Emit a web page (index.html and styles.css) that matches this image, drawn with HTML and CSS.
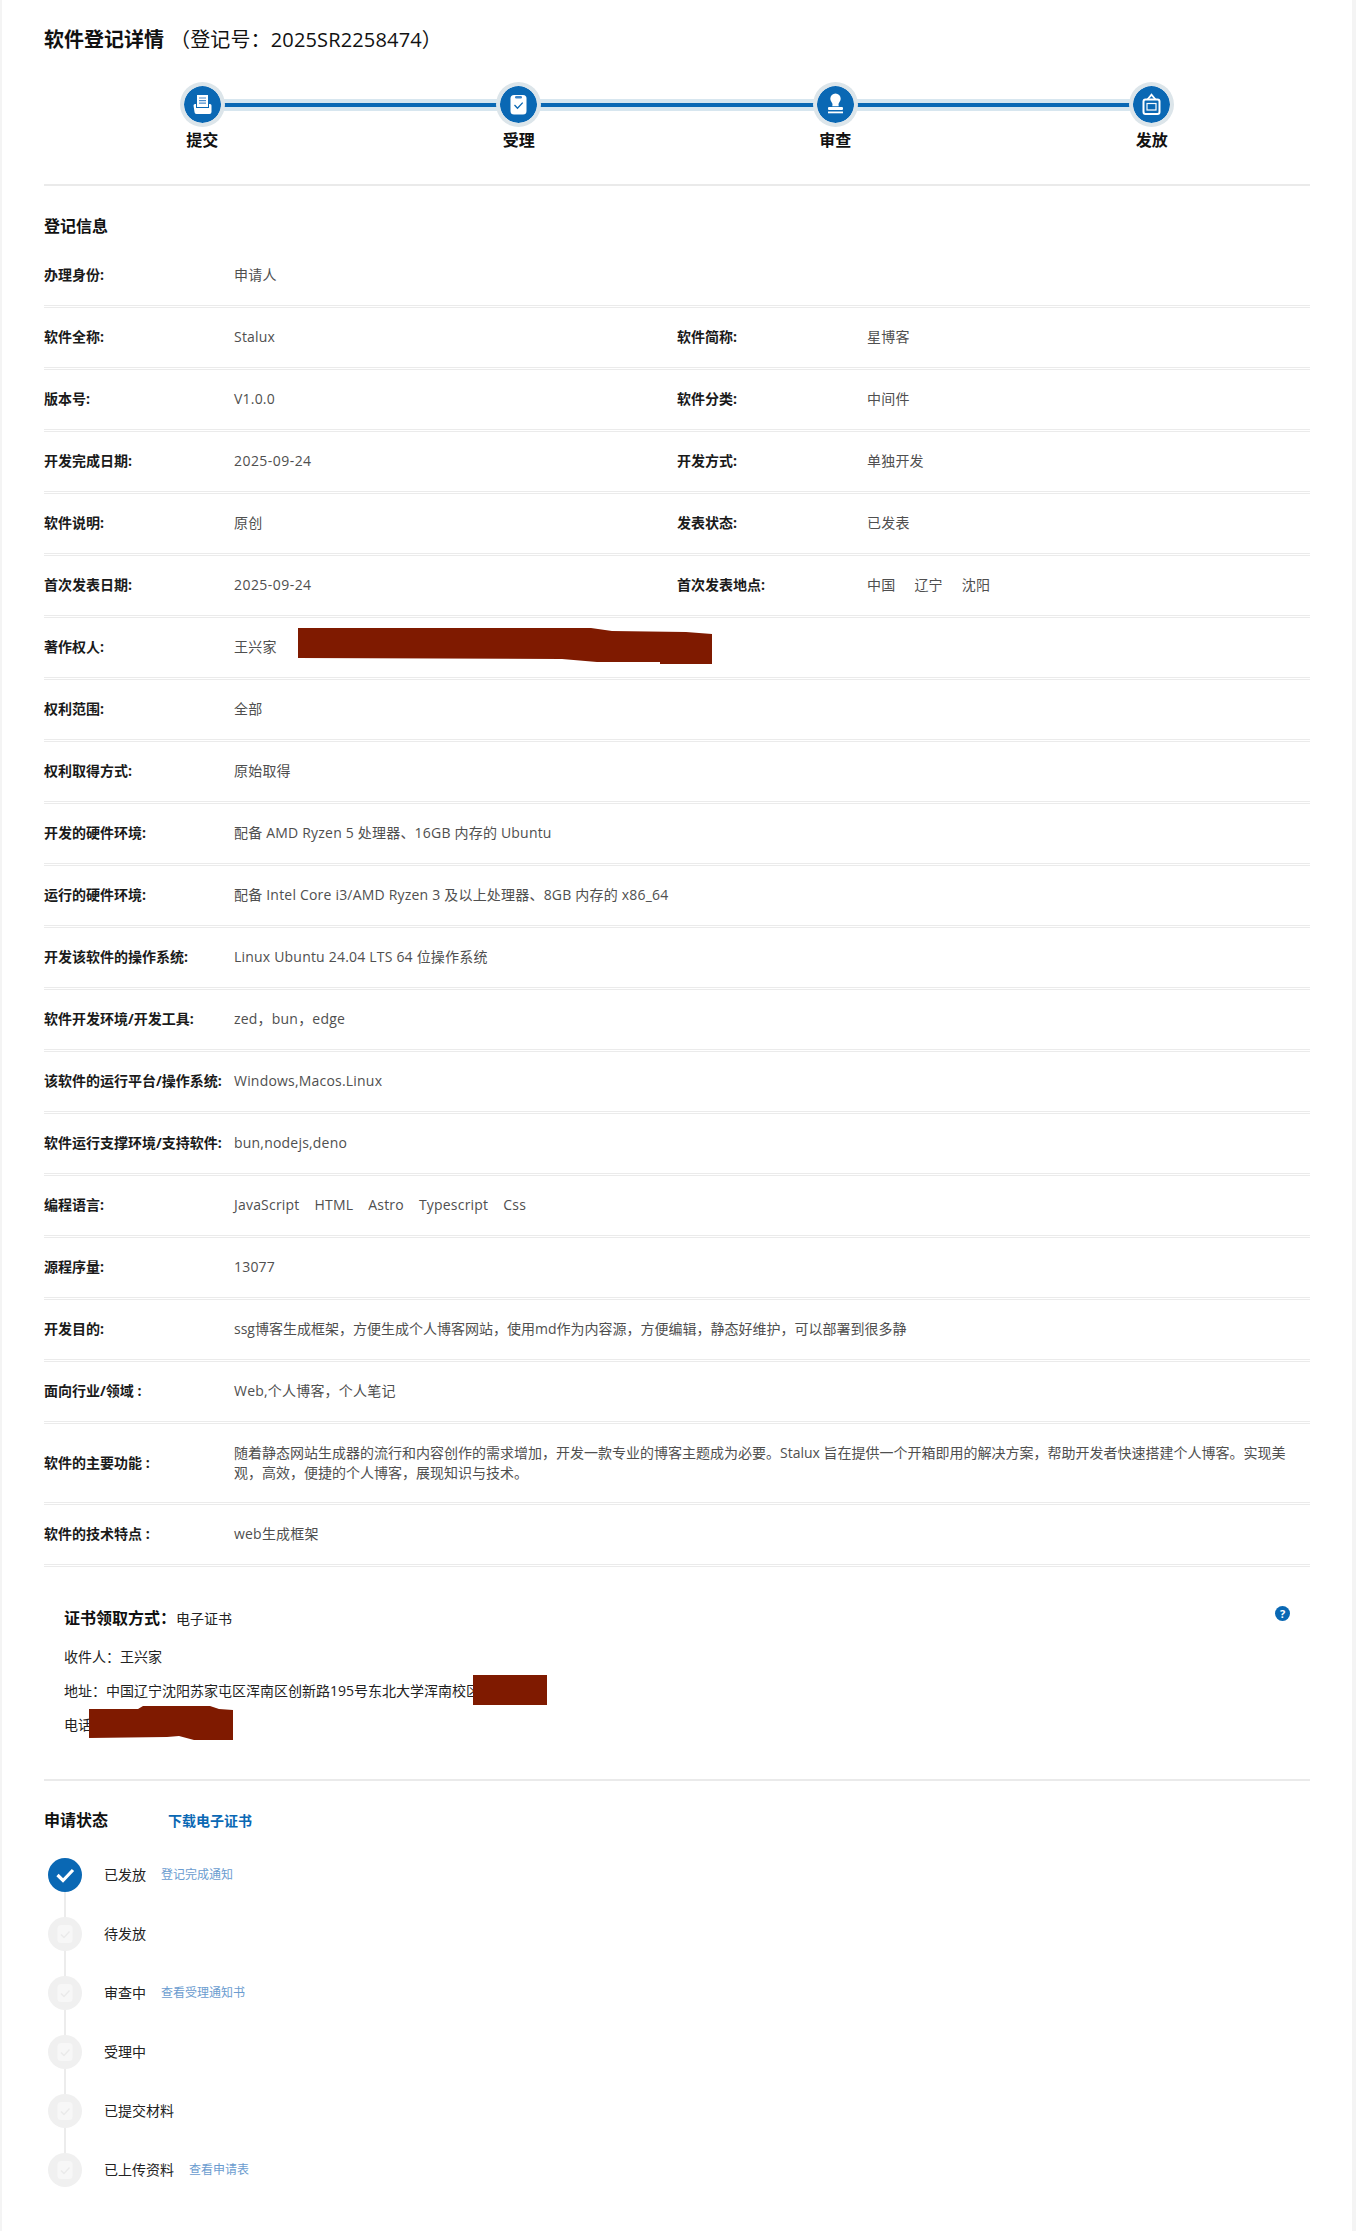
FILE: index.html
```html
<!DOCTYPE html>
<html lang="zh-CN">
<head>
<meta charset="utf-8">
<title>软件登记详情</title>
<link rel="stylesheet" href="styles.css">
</head>
<body>
<main class="page">
  <h1 class="title"><strong>软件登记详情</strong><span class="title-no">（登记号：2025SR2258474）</span></h1>

  <ol class="steps">
    <li class="step">
      <span class="step-dot">
        <svg class="step-icon" viewBox="0 0 37 37"><rect x="13" y="9" width="11" height="12" fill="#fff"/><path d="M15 12h7M15 14.6h7M15 17.2h7" stroke="#4a8ccb" stroke-width="1.2"/><path d="M9.5 19.5a1.5 1.5 0 0 1 1.5-1.5h1v4h13v-4h1a1.5 1.5 0 0 1 1.5 1.5V26a2 2 0 0 1-2 2h-13a2 2 0 0 1-2-2z" fill="#fff"/></svg>
      </span>
      <span class="step-name">提交</span>
    </li>
    <li class="step">
      <span class="step-dot">
        <svg class="step-icon" viewBox="0 0 37 37"><rect x="10.5" y="9" width="16" height="19.5" rx="3.5" fill="#fff"/><rect x="15" y="10" width="7" height="2.4" rx="1.2" fill="#3f86c8"/><path d="M14.5 19l3 3.2 5.2-5.6" fill="none" stroke="#0a68b4" stroke-width="1.3"/></svg>
      </span>
      <span class="step-name">受理</span>
    </li>
    <li class="step">
      <span class="step-dot">
        <svg class="step-icon" viewBox="0 0 37 37"><path d="M18.5 7.500a5.200 5.200 0 0 1 5.200 5.200c0 2.300-1.700 3.600-2.200 5.300l.2 2.200h-6.400l.2-2.200c-.5-1.700-2.200-3-2.200-5.300a5.200 5.200 0 0 1 5.200-5.200z" fill="#fff"/><rect x="11" y="21" width="15" height="3" rx="1" fill="#fff"/><rect x="11" y="25.500" width="15" height="1.800" fill="#fff"/></svg>
      </span>
      <span class="step-name">审查</span>
    </li>
    <li class="step">
      <span class="step-dot">
        <svg class="step-icon" viewBox="0 0 37 37"><path d="M14.500 13.500l4-4.800 4 4.800" fill="none" stroke="#fff" stroke-width="1.800"/><rect x="10.500" y="13.500" width="16" height="14.500" rx="2" fill="none" stroke="#fff" stroke-width="2"/><rect x="14" y="17.500" width="9" height="6.500" fill="none" stroke="#fff" stroke-width="1.200"/></svg>
      </span>
      <span class="step-name">发放</span>
    </li>
  </ol>

  <section class="info">
    <h2 class="section-title">登记信息</h2>

    <div class="row"><div class="field"><span class="label">办理身份:</span><span class="value">申请人</span></div></div>
    <div class="row row-two">
      <div class="field"><span class="label">软件全称:</span><span class="value">Stalux</span></div>
      <div class="field"><span class="label">软件简称:</span><span class="value">星博客</span></div>
    </div>
    <div class="row row-two">
      <div class="field"><span class="label">版本号:</span><span class="value">V1.0.0</span></div>
      <div class="field"><span class="label">软件分类:</span><span class="value">中间件</span></div>
    </div>
    <div class="row row-two">
      <div class="field"><span class="label">开发完成日期:</span><span class="value value-date">2025-09-24</span></div>
      <div class="field"><span class="label">开发方式:</span><span class="value">单独开发</span></div>
    </div>
    <div class="row row-two">
      <div class="field"><span class="label">软件说明:</span><span class="value">原创</span></div>
      <div class="field"><span class="label">发表状态:</span><span class="value">已发表</span></div>
    </div>
    <div class="row row-two">
      <div class="field"><span class="label">首次发表日期:</span><span class="value value-date">2025-09-24</span></div>
      <div class="field"><span class="label">首次发表地点:</span><span class="value tags tags-wide"><span>中国</span><span>辽宁</span><span>沈阳</span></span></div>
    </div>
    <div class="row">
      <div class="field"><span class="label">著作权人:</span><span class="value">王兴家</span></div>
      <svg class="redact redact-author" viewBox="0 0 414 36"><polygon points="0,0 293,0 314,3 388,4 414,6 414,36 362,36 362,34 299,34 264,31 0,30"/></svg>
    </div>
    <div class="row"><div class="field"><span class="label">权利范围:</span><span class="value">全部</span></div></div>
    <div class="row"><div class="field"><span class="label">权利取得方式:</span><span class="value">原始取得</span></div></div>
    <div class="row"><div class="field"><span class="label">开发的硬件环境:</span><span class="value">配备 AMD Ryzen 5 处理器、16GB 内存的 Ubuntu</span></div></div>
    <div class="row"><div class="field"><span class="label">运行的硬件环境:</span><span class="value">配备 Intel Core i3/AMD Ryzen 3 及以上处理器、8GB 内存的 x86_64</span></div></div>
    <div class="row"><div class="field"><span class="label">开发该软件的操作系统:</span><span class="value">Linux Ubuntu 24.04 LTS 64 位操作系统</span></div></div>
    <div class="row"><div class="field"><span class="label">软件开发环境/开发工具:</span><span class="value">zed，bun，edge</span></div></div>
    <div class="row"><div class="field"><span class="label">该软件的运行平台/操作系统:</span><span class="value">Windows,Macos.Linux</span></div></div>
    <div class="row"><div class="field"><span class="label">软件运行支撑环境/支持软件:</span><span class="value">bun,nodejs,deno</span></div></div>
    <div class="row"><div class="field"><span class="label">编程语言:</span><span class="value tags"><span>JavaScript</span><span>HTML</span><span>Astro</span><span>Typescript</span><span>Css</span></span></div></div>
    <div class="row"><div class="field"><span class="label">源程序量:</span><span class="value">13077</span></div></div>
    <div class="row"><div class="field"><span class="label">开发目的:</span><span class="value value-prose">ssg博客生成框架，方便生成个人博客网站，使用md作为内容源，方便编辑，静态好维护，可以部署到很多静</span></div></div>
    <div class="row"><div class="field"><span class="label">面向行业/领域 :</span><span class="value">Web,个人博客，个人笔记</span></div></div>
    <div class="row row-tall"><div class="field"><span class="label">软件的主要功能 :</span><span class="value value-prose">随着静态网站生成器的流行和内容创作的需求增加，开发一款专业的博客主题成为必要。Stalux 旨在提供一个开箱即用的解决方案，帮助开发者快速搭建个人博客。实现美观，高效，便捷的个人博客，展现知识与技术。</span></div></div>
    <div class="row"><div class="field"><span class="label">软件的技术特点 :</span><span class="value">web生成框架</span></div></div>
  </section>

  <section class="cert">
    <div class="cert-head">
      <p class="cert-method"><strong>证书领取方式：</strong>电子证书</p>
      <span class="help">?</span>
    </div>
    <p class="cert-line">收件人：王兴家</p>
    <p class="cert-line">地址：中国辽宁沈阳苏家屯区浑南区创新路195号东北大学浑南校区
      <svg class="redact redact-address" viewBox="0 0 74 30"><rect width="74" height="30"/></svg>
    </p>
    <p class="cert-line">电话
      <svg class="redact redact-phone" viewBox="0 0 144 34"><polygon points="0,3 49,3 54,0 121,0 130,3 144,4 144,34 105,34 90,30 78,31 0,32"/></svg>
    </p>
  </section>

  <section class="status">
    <div class="status-head">
      <h2 class="section-title">申请状态</h2>
      <a class="download" href="#">下载电子证书</a>
    </div>
    <ul class="timeline">
      <li class="event">
        <span class="event-dot event-dot-done"><svg viewBox="0 0 34 34"><path d="M9.500 17l5.500 5.500L25 12" fill="none" stroke="#fff" stroke-width="3.200"/></svg></span>
        <span class="event-name">已发放</span><a class="event-link" href="#">登记完成通知</a>
      </li>
      <li class="event">
        <span class="event-dot"><svg viewBox="0 0 34 34"><rect x="9.500" y="8" width="15" height="18" rx="3.500" fill="#f7f7f7"/><path d="M13 17.500l3 3 5.500-6" fill="none" stroke="#eaeaea" stroke-width="1.300"/></svg></span>
        <span class="event-name">待发放</span>
      </li>
      <li class="event">
        <span class="event-dot"><svg viewBox="0 0 34 34"><rect x="9.500" y="8" width="15" height="18" rx="3.500" fill="#f7f7f7"/><path d="M13 17.500l3 3 5.500-6" fill="none" stroke="#eaeaea" stroke-width="1.300"/></svg></span>
        <span class="event-name">审查中</span><a class="event-link" href="#">查看受理通知书</a>
      </li>
      <li class="event">
        <span class="event-dot"><svg viewBox="0 0 34 34"><rect x="9.500" y="8" width="15" height="18" rx="3.500" fill="#f7f7f7"/><path d="M13 17.500l3 3 5.500-6" fill="none" stroke="#eaeaea" stroke-width="1.300"/></svg></span>
        <span class="event-name">受理中</span>
      </li>
      <li class="event">
        <span class="event-dot"><svg viewBox="0 0 34 34"><rect x="9.500" y="8" width="15" height="18" rx="3.500" fill="#f7f7f7"/><path d="M13 17.500l3 3 5.500-6" fill="none" stroke="#eaeaea" stroke-width="1.300"/></svg></span>
        <span class="event-name">已提交材料</span>
      </li>
      <li class="event">
        <span class="event-dot"><svg viewBox="0 0 34 34"><rect x="9.500" y="8" width="15" height="18" rx="3.500" fill="#f7f7f7"/><path d="M13 17.500l3 3 5.500-6" fill="none" stroke="#eaeaea" stroke-width="1.300"/></svg></span>
        <span class="event-name">已上传资料</span><a class="event-link" href="#">查看申请表</a>
      </li>
    </ul>
  </section>
</main>
</body>
</html>
```

FILE: styles.css
```css
* { box-sizing: border-box; }
html, body { margin: 0; padding: 0; }
body {
  background: #f4f4f4;
  color: #222;
  font-family: "Open Sans", "Noto Sans CJK SC", sans-serif;
  font-size: 14px;
}
h1, h2, p, ol, ul { margin: 0; padding: 0; }
ol, ul { list-style: none; }
a { text-decoration: none; }

.page {
  margin: 0 4px 0 2px;
  min-height: 2231px;
  padding: 26px 42px 0;
  background: #fff;
}

.title {
  font-size: 20px;
  font-weight: 400;
  line-height: 28px;
  color: #111;
}
.title strong { font-weight: 700; }
.title-no { margin-left: 6px; letter-spacing: 0.15px; }

.steps {
  position: relative;
  display: grid;
  grid-template-columns: repeat(4, 1fr);
  margin-top: 28px;
  padding-bottom: 33px;
  border-bottom: 2px solid #eaeaea;
}
.steps::before,
.steps::after {
  content: "";
  position: absolute;
  left: 12.5%;
  right: 12.5%;
}
.steps::before { top: 17px; height: 12px; background: #d7e6ef; }
.steps::after { top: 21px; height: 4px; background: #0a68b4; }

.step {
  position: relative;
  z-index: 1;
  display: flex;
  flex-direction: column;
  align-items: center;
}
.step-dot {
  width: 45px;
  height: 45px;
  padding: 4px;
  border-radius: 50%;
  background: #0a68b4;
  background-clip: content-box;
  box-shadow: inset 0 0 0 4px #dce5ea;
}
.step-icon { display: block; width: 37px; height: 37px; }
.step-name {
  margin-top: 2px;
  font-size: 16px;
  font-weight: 700;
  line-height: 22px;
  color: #111;
}

.section-title {
  font-size: 16px;
  font-weight: 700;
  line-height: 22px;
  color: #111;
}
.info { padding-top: 29px; }
.info > .section-title { margin-bottom: 9px; }

.row {
  position: relative;
  padding: 19px 0 20px;
  border-bottom: 3px double #ebebeb;
}
.row-two { display: grid; grid-template-columns: 1fr 1fr; }
.row-tall { padding-bottom: 19px; }

.field { display: flex; align-items: center; }
.label {
  flex: none;
  width: 190px;
  font-weight: 700;
  line-height: 20px;
  color: #1a1a1a;
}
.value {
  flex: 1;
  min-width: 0;
  line-height: 20px;
  color: #4f4f4f;
  letter-spacing: 0.2px;
}
.value-date { letter-spacing: 0.45px; }
.value-prose { letter-spacing: 0; }
.tags { display: flex; gap: 15px; }
.tags-wide { gap: 19px; }

.redact { position: absolute; display: block; fill: #7f1a00; }
.redact-author { left: 254px; top: 10px; width: 414px; height: 36px; }
.redact-address { left: 409px; top: 1px; width: 74px; height: 30px; }
.redact-phone { left: 25px; top: -2px; width: 144px; height: 34px; }

.cert { margin-top: 39px; padding: 0 20px 37px; border-bottom: 2px solid #eaeaea; }
.cert-head {
  display: flex;
  justify-content: space-between;
  align-items: flex-start;
  margin-bottom: 9px;
}
.cert-method { line-height: 24px; color: #222; }
.cert-method strong { font-size: 16px; color: #111; }
.help {
  width: 15px;
  height: 15px;
  border-radius: 50%;
  background: #0a68b4;
  color: #fff;
  font-size: 11px;
  font-weight: 700;
  line-height: 15px;
  text-align: center;
}
.cert-line { position: relative; line-height: 34px; color: #222; }

.status { padding-top: 28px; }
.status-head { display: flex; align-items: center; gap: 60px; }
.download { font-weight: 700; color: #0a68b4; }

.timeline {
  display: flex;
  flex-direction: column;
  gap: 25px;
  margin-top: 27px;
  padding-left: 4px;
}
.event {
  position: relative;
  display: flex;
  align-items: center;
  height: 34px;
}
.event:not(:last-child)::after {
  content: "";
  position: absolute;
  left: 16px;
  top: 34px;
  width: 2px;
  height: 25px;
  background: #ececec;
}
.event-dot {
  flex: none;
  width: 34px;
  height: 34px;
  border-radius: 50%;
  background: #f0f0f0;
}
.event-dot svg { display: block; width: 34px; height: 34px; }
.event-dot-done { background: #0a68b4; }
.event-name { margin-left: 22px; padding-bottom: 2px; color: #222; }
.event-link { margin-left: 15px; padding-bottom: 2px; font-size: 12px; color: #6b9ccf; }
```
